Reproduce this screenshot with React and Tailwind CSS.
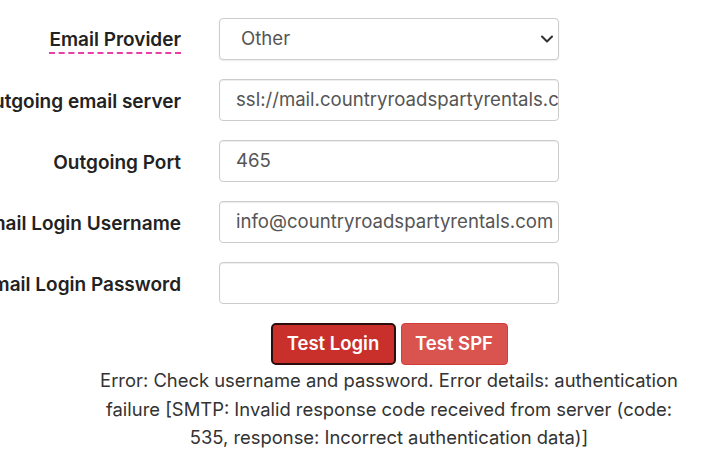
import { ChevronDown } from 'lucide-react'

const font = { fontFamily: 'Inter, "Noto Sans", sans-serif' }

function Row({ label, children, dashed }) {
  return (
    <div className="flex items-center h-[42px]">
      <div className="w-[181px] shrink-0 flex justify-end whitespace-nowrap pt-[4px]">
        <span
          className={
            'text-[19px] font-semibold text-[#222] leading-[24px] ' +
            (dashed ? 'border-b-2 border-dashed border-[#e83ea8]' : '')
          }
        >
          {label}
        </span>
      </div>
      <div className="ml-[38px] w-[340px] h-[42px] shrink-0">{children}</div>
    </div>
  )
}

function Field({ value }) {
  return (
    <div className="h-full w-full rounded-[4px] border border-[#cccccc] bg-white shadow-[inset_0_1px_1px_rgba(0,0,0,0.075)] flex items-center px-[16px] overflow-hidden">
      <span className="text-[18.6px] text-[#555] whitespace-nowrap">{value}</span>
    </div>
  )
}

export default function App() {
  return (
    <div className="w-[726px] h-[458px] overflow-hidden bg-white" style={font}>
      <div className="pt-[18px] flex flex-col gap-[19px]">
        <Row label="Email Provider" dashed>
          <div className="h-full w-full rounded-[4px] border border-[#cccccc] bg-white shadow-[0_1px_2px_rgba(0,0,0,0.08)] flex items-center justify-between pl-[21px] pr-[1px]">
            <span className="text-[18.6px] text-[#555]">Other</span>
            <ChevronDown size={20} strokeWidth={2.5} className="text-[#333]" />
          </div>
        </Row>
        <Row label="Outgoing email server">
          <Field value="ssl://mail.countryroadspartyrentals.com" />
        </Row>
        <Row label="Outgoing Port">
          <Field value="465" />
        </Row>
        <Row label="Email Login Username">
          <Field value="info@countryroadspartyrentals.com" />
        </Row>
        <Row label="Email Login Password">
          <Field value="" />
        </Row>
      </div>

      <div className="mt-[19px] pl-[52px] flex flex-col items-center">
        <div className="flex gap-[5px]">
          <button className="h-[42px] w-[125px] rounded-[5px] border-2 border-[#2a0d0c] bg-[#c9302c] text-white text-[18.5px] font-semibold">
            Test Login
          </button>
          <button className="h-[42px] w-[107px] rounded-[4px] border border-[#d43f3a] bg-[#d9534f] text-white text-[18.5px] font-semibold">
            Test SPF
          </button>
        </div>
        <p className="text-center text-[18.4px] leading-[28.5px] text-[#333] whitespace-nowrap pt-[1px]">
          Error: Check username and password. Error details: authentication
          <br />
          failure [SMTP: Invalid response code received from server (code:
          <br />
          535, response: Incorrect authentication data)]
        </p>
      </div>
    </div>
  )
}
